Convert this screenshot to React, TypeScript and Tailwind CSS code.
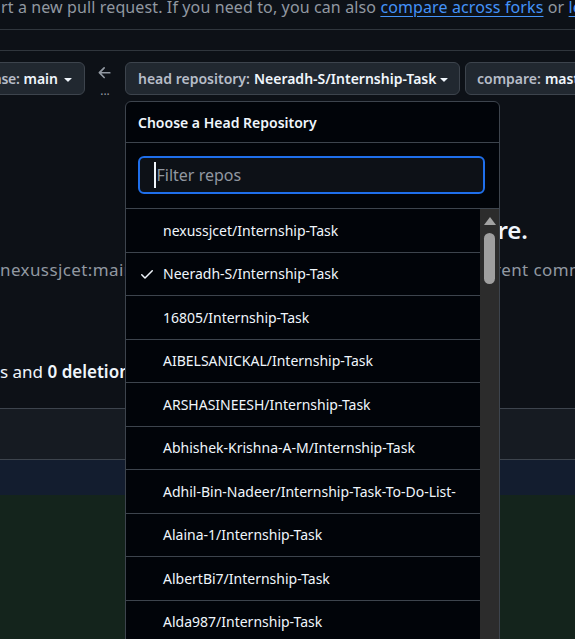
const repos = [
  "nexussjcet/Internship-Task",
  "Neeradh-S/Internship-Task",
  "16805/Internship-Task",
  "AIBELSANICKAL/Internship-Task",
  "ARSHASINEESH/Internship-Task",
  "Abhishek-Krishna-A-M/Internship-Task",
  "Adhil-Bin-Nadeer/Internship-Task-To-Do-List-",
  "Alaina-1/Internship-Task",
  "AlbertBi7/Internship-Task",
  "Alda987/Internship-Task",
  "Alen-Thomas/Internship-Task",
];

const Caret = () => (
  <svg viewBox="0 0 16 16" className="w-4 h-4 shrink-0 fill-current text-[#f0f6fc]">
    <path d="m4.427 7.427 3.396 3.396a.25.25 0 0 0 .354 0l3.396-3.396A.25.25 0 0 0 11.396 7H4.604a.25.25 0 0 0-.177.427Z" />
  </svg>
);

const App = () => {
  return (
    <div className="relative h-[639px] w-full overflow-hidden bg-[#0d1117] font-['Noto_Sans','Liberation_Sans',sans-serif] text-[#f0f6fc]">
      {/* intro text */}
      <div className="h-[30px] border-b border-[#30363d] overflow-hidden">
        <p className="-mt-[5px] ml-[1px] whitespace-nowrap text-[16px] leading-[24px] tracking-[0.12px] text-[#9198a1]">
          rt a new pull request. If you need to, you can also{" "}
          <a className="text-[#4493f8] underline underline-offset-[3px]">compare across forks</a> or{" "}
          <a className="text-[#4493f8] underline underline-offset-[3px]">learn more about diff comparisons</a>.
        </p>
      </div>
      <div className="h-[21px] border-b border-[#30363d]" />

      {/* range editor */}
      <div className="h-[55px] pt-[11px] flex items-start text-[14px] font-semibold">
        <div className="w-[85px] shrink-0 flex justify-end">
          <button className="shrink-0 h-[33px] flex items-center pl-3 pr-2 rounded-md border border-[#3d444d] bg-[#212830] whitespace-nowrap">
            <span className="text-[#b7bdc8] tracking-[-0.3px]">base:</span>
            <span className="ml-1">main</span>
            <span className="ml-[2px]"><Caret /></span>
          </button>
        </div>
        <div className="w-[40px] shrink-0 flex flex-col items-center text-[#9198a1]">
          <svg viewBox="0 0 16 16" className="w-[18px] h-[18px] mt-[2px] fill-current">
            <path d="M7.78 12.53a.75.75 0 0 1-1.06 0L2.47 8.28a.75.75 0 0 1 0-1.06l4.25-4.25a.751.751 0 0 1 1.042.018.751.751 0 0 1 .018 1.042L4.81 7h7.44a.75.75 0 0 1 0 1.5H4.81l2.97 2.97a.75.75 0 0 1 0 1.06Z" />
          </svg>
          <span className="text-[12px] leading-[12px] font-normal mt-[3px]">...</span>
        </div>
        <button className="shrink-0 w-[335px] h-[33px] flex items-center pl-3 pr-2 rounded-md border border-[#3d444d] bg-[#212830] whitespace-nowrap">
          <span className="text-[#b7bdc8]">head repository:</span>
          <span className="ml-1">Neeradh-S/Internship-Task</span>
          <span className="ml-auto"><Caret /></span>
        </button>
        <button className="ml-[5px] shrink-0 h-[33px] flex items-center pl-[11px] pr-2 rounded-md border border-[#3d444d] bg-[#212830] whitespace-nowrap">
          <span className="text-[#b7bdc8]">compare:</span>
          <span className="ml-1">master</span>
          <span className="ml-[2px]"><Caret /></span>
        </button>
      </div>

      {/* blankslate */}
      <div className="h-[302px] flex flex-col">
        <div className="mt-[108px] w-[528px] text-right text-[24px] leading-[32px] font-semibold whitespace-nowrap">
          There isn’t anything to compare.
        </div>
        <p className="mt-[12px] flex text-[17px] leading-[24px] tracking-[0.4px] text-[#9198a1] whitespace-nowrap">
          <span className="w-[456px] shrink-0">nexussjcet:main and Neeradh-S:master are entirely</span>
          <span>different commit histories.</span>
        </p>
        <p className="mt-[78px] text-[17px] leading-[24px] whitespace-nowrap">
          s and <b className="font-semibold">0 deletions</b>.
        </p>
      </div>

      {/* diff bands */}
      <div className="h-[51px] border-t border-[#3d444d] bg-[#161b22]" />
      <div className="h-[36px] border-t border-[#3d444d] bg-[#131d2f]" />
      <div className="h-[200px] bg-[#14241c]" />

      {/* head repository dropdown */}
      <div className="absolute left-[125px] top-[101px] w-[375px] h-[560px] flex flex-col rounded-t-md border border-[#3d444d] bg-[#010409] overflow-hidden">
        <div className="h-[41px] shrink-0 flex items-center px-3 border-b border-[#3d444d] text-[14px] font-semibold">
          Choose a Head Repository
        </div>
        <div className="h-[66px] shrink-0 pt-[13px] pl-3 border-b border-[#3d444d]">
          <div className="w-[347px] h-[38px] flex items-center pl-[14px] rounded-md border-2 border-[#1f6feb] bg-[#0d1117] text-[16px] text-[#9198a1]">
            <span className="w-[1.5px] h-[26px] bg-[#f0f6fc] mr-[1px]" />
            Filter repos
          </div>
        </div>
        <div className="flex flex-1 min-h-0">
          <ul className="w-[354px] shrink-0">
            {repos.map((repo, i) => (
              <li key={repo} className="h-[43.5px] flex items-center border-b border-[#3d444d] text-[14px] whitespace-nowrap">
                <span className="w-[37px] shrink-0 flex pl-[13px]">
                  {i === 1 && (
                    <svg viewBox="0 0 16 16" className="w-4 h-4 fill-current">
                      <path d="M13.78 4.22a.75.75 0 0 1 0 1.06l-7.25 7.25a.75.75 0 0 1-1.06 0L2.22 9.28a.751.751 0 0 1 .018-1.042.751.751 0 0 1 1.042-.018L6 10.94l6.72-6.72a.75.75 0 0 1 1.06 0Z" />
                    </svg>
                  )}
                </span>
                {repo}
              </li>
            ))}
          </ul>
          <div className="w-[19px] shrink-0 bg-[#2c2c2c] flex flex-col items-center">
            <svg viewBox="0 0 12 8" className="mt-[8px] w-[12px] h-[8px] fill-[#a3a3a3]">
              <path d="M6 0 12 8H0Z" />
            </svg>
            <div className="mt-[8px] w-[11px] h-[51px] rounded-full bg-[#9f9f9f]" />
          </div>
        </div>
      </div>
    </div>
  );
};

export default App;
